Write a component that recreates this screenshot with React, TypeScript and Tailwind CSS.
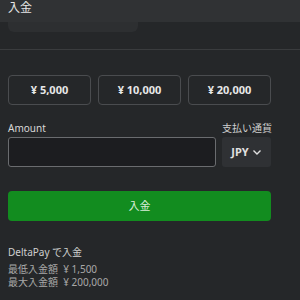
import React from 'react';

const amounts = ['¥ 5,000', '¥ 10,000', '¥ 20,000'];

export default function App() {
  return (
    <div
      className="w-[300px] h-[300px] overflow-hidden bg-[#252729] text-white"
      style={{ fontFamily: '"Noto Sans", "Noto Sans CJK JP", sans-serif' }}
    >
      <div className="h-[22px] bg-[#303234] px-2 flex items-start">
        <span className="text-[12px] leading-[16px] text-[#e6e6e6]">入金</span>
      </div>
      <div className="px-2">
        <div className="h-[10px] w-[130px] bg-[#2d2f31] rounded-b-md" />
      </div>
      <div className="h-[17px]" />
      <div className="h-px bg-[#3a3c3e]" />
      <div className="pl-2 pr-[29px] pt-[25px]">
        <div className="grid grid-cols-3 gap-[7px]">
          {amounts.map((a) => (
            <button
              key={a}
              className="h-[30px] rounded-[4px] border border-[#4a4c4f] text-[11px] font-bold text-[#e8e8e8]"
            >
              {a}
            </button>
          ))}
        </div>
        <div className="mt-[17px] flex gap-[6px]">
          <div className="flex-1 flex flex-col">
            <label className="text-[10px] leading-[13px] text-[#d8d8d8] mb-[2px]">Amount</label>
            <input
              className="h-[30px] w-full rounded-[3px] border border-[#6a6c6f] bg-[#1c1d20] outline-none"
            />
          </div>
          <div className="w-[49px] flex flex-col">
            <label className="text-[10px] leading-[13px] text-[#cfcfcf] mb-[2px] whitespace-nowrap">支払い通貨</label>
            <div className="h-[30px] rounded-[3px] bg-[#2f3134] flex items-center justify-center gap-[3px] text-[11px] font-bold text-[#e0e0e0]">
              JPY
              <svg width="10" height="10" viewBox="0 0 10 10" fill="none" stroke="#e0e0e0" strokeWidth="1.4">
                <path d="M1.5 3.5 L5 7 L8.5 3.5" />
              </svg>
            </div>
          </div>
        </div>
        <button className="mt-[24px] h-[30px] w-full rounded-[4px] bg-[#128c1f] text-[11px] text-[#d8ecd8]">
          入金
        </button>
        <div className="mt-[25px] text-[10px] leading-[13px]">
          <div className="text-[#d0d0d0] mb-[4px]">DeltaPay で入金</div>
          <div className="text-[#a8a8a8] whitespace-pre">最低入金額  ¥ 1,500</div>
          <div className="text-[#a8a8a8] whitespace-pre">最大入金額  ¥ 200,000</div>
        </div>
      </div>
    </div>
  );
}
